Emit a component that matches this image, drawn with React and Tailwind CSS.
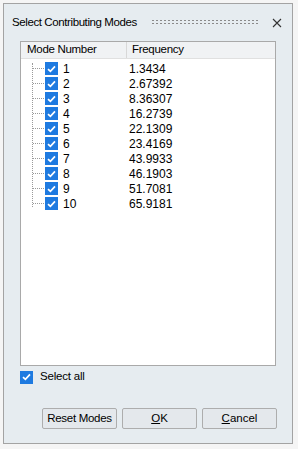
import React from 'react';

const modes = [
  ['1', '1.3434'],
  ['2', '2.67392'],
  ['3', '8.36307'],
  ['4', '16.2739'],
  ['5', '22.1309'],
  ['6', '23.4169'],
  ['7', '43.9933'],
  ['8', '46.1903'],
  ['9', '51.7081'],
  ['10', '65.9181'],
];

const Check = ({ className = '' }) => (
  <span className={`flex items-center justify-center w-[13px] h-[13px] bg-[#1e7ae0] ${className}`}>
    <svg width="9" height="8" viewBox="0 0 9 8">
      <path d="M1 4.2 L3.4 6.4 L8 1.4" fill="none" stroke="white" strokeWidth="1.7" />
    </svg>
  </span>
);

const App = () => {
  return (
    <div className="w-[298px] h-[449px] bg-[#f5f5f5] p-[3px] font-['Liberation_Sans',sans-serif] text-[12px] text-black">
      <div className="w-[290px] h-[441px] border border-[#a3a3a3] bg-[#e6ecf0] flex flex-col">
        {/* Title bar */}
        <div className="h-[37px] flex items-center pl-[8px] pr-[10px]">
          <span className="text-[11.5px] tracking-[-0.4px] whitespace-nowrap">Select Contributing Modes</span>
          <div className="flex-1 ml-[14px] mr-[12px] h-[7px] bg-[radial-gradient(circle,#8a8a8a_0.6px,transparent_0.8px)] bg-[length:4px_3px]" />
          <svg width="10" height="10" viewBox="0 0 10 10">
            <path d="M1 1 L9 9 M9 1 L1 9" stroke="#333" strokeWidth="1.1" />
          </svg>
        </div>

        {/* List */}
        <div className="mx-[16px] h-[325px] border border-[#a9a9a9] bg-white flex flex-col">
          <div className="h-[17px] flex bg-[#f0f2f4] border-b border-[#e0e0e0] text-[11.5px] tracking-[-0.3px]">
            <div className="w-[106px] pl-[6px] flex items-center border-r border-[#d8d8d8]">Mode Number</div>
            <div className="flex-1 pl-[5px] flex items-center">Frequency</div>
          </div>
          <div className="relative pt-[2px]">
            <div className="absolute left-[11px] top-[4px] h-[144px] border-l border-dotted border-[#9a9a9a]" />
            {modes.map(([n, f]) => (
              <div key={n} className="h-[15px] flex items-center">
                <div className="w-[12px]" />
                <div className="w-[11px] border-t border-dotted border-[#9a9a9a]" />
                <Check className="ml-[1px]" />
                <span className="ml-[5px] w-[66px]">{n}</span>
                <span>{f}</span>
              </div>
            ))}
          </div>
        </div>

        {/* Select all */}
        <div className="mt-[4px] ml-[16px] flex items-center h-[14px]">
          <Check />
          <span className="ml-[7px] text-[11.5px] tracking-[-0.2px]">Select all</span>
        </div>

        {/* Buttons */}
        <div className="mt-[24px] flex justify-end gap-[5px] pr-[15px] text-[11.5px]">
          <button className="w-[75px] h-[21px] border border-[#adadad] rounded-[2px] bg-[#e4e8ec] tracking-[-0.3px]">Reset Modes</button>
          <button className="w-[75px] h-[21px] border border-[#adadad] rounded-[2px] bg-[#e4e8ec]"><span className="underline">O</span>K</button>
          <button className="w-[75px] h-[21px] border border-[#adadad] rounded-[2px] bg-[#e4e8ec]"><span className="underline">C</span>ancel</button>
        </div>
      </div>
    </div>
  );
};

export default App;
